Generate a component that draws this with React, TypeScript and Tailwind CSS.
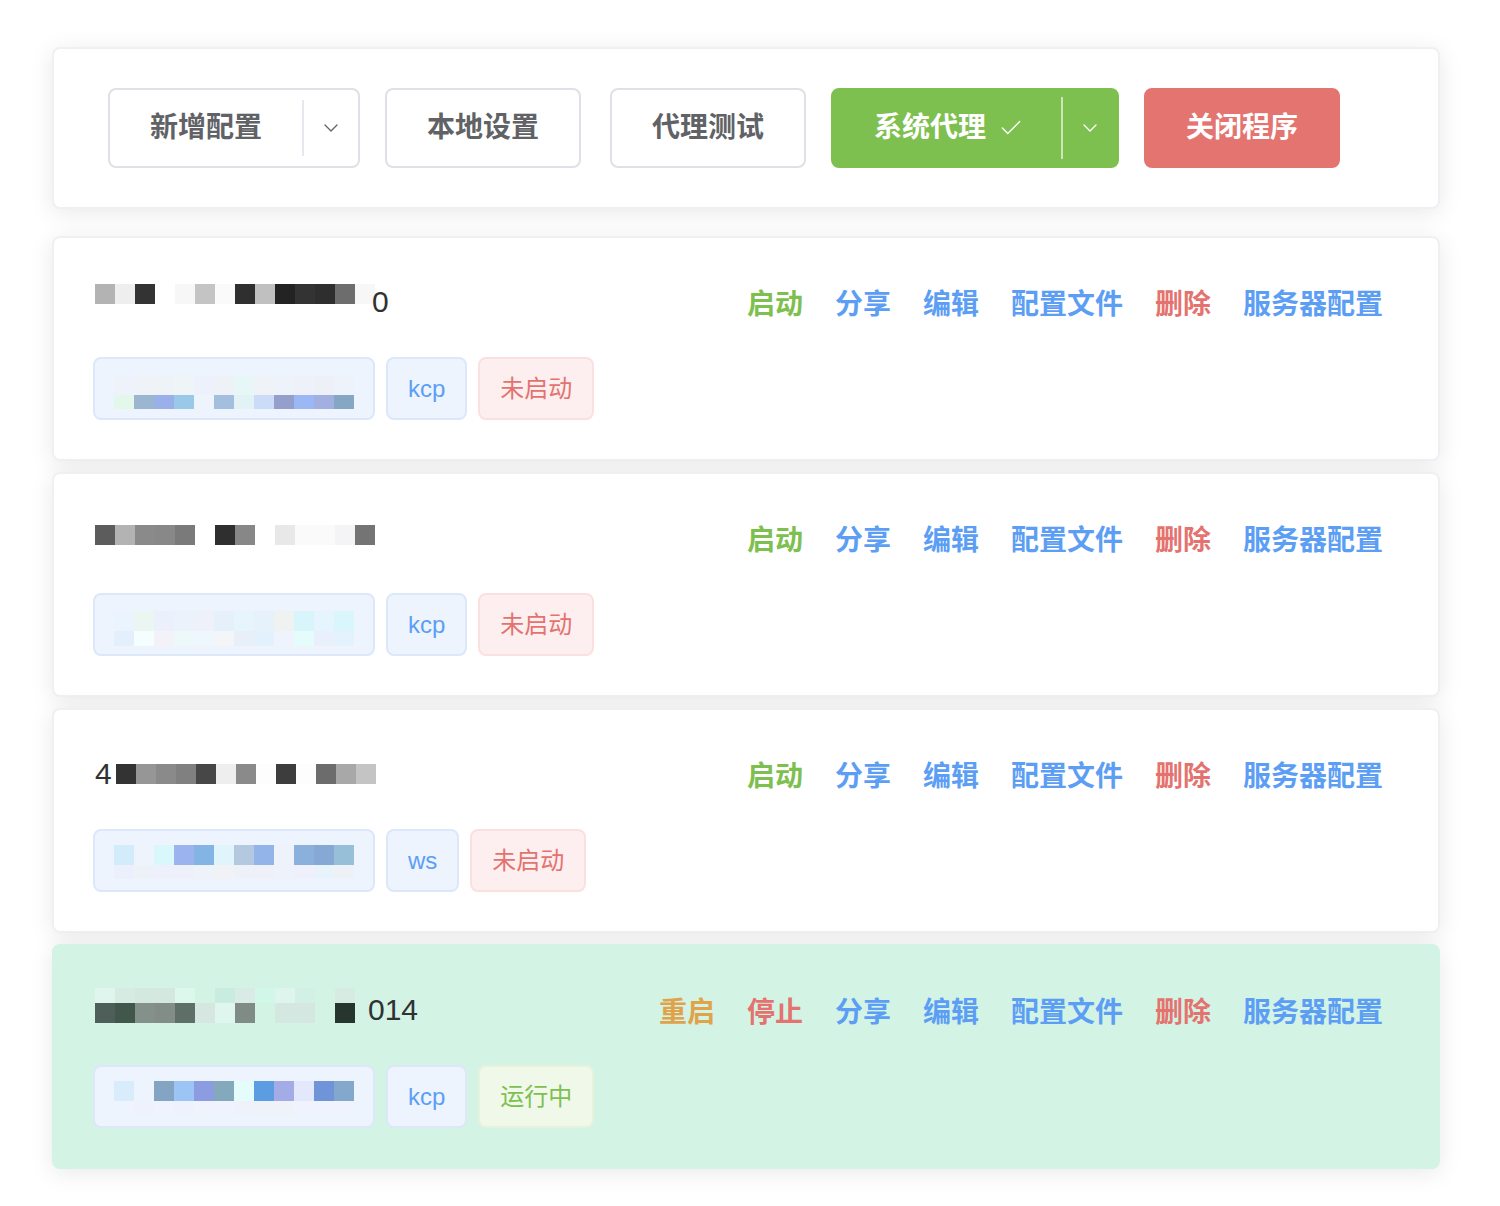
import React from "react";
import { ChevronDown, Check } from "lucide-react";

type Row = { h: number; c: (string | null)[] };

function Mosaic({ rows }: { rows: Row[] }) {
  return (
    <div className="flex flex-col">
      {rows.map((row, i) => (
        <div key={i} className="flex">
          {row.c.map((color, j) => (
            <div
              key={j}
              className="w-[20px] shrink-0"
              style={{ height: row.h, backgroundColor: color ?? "transparent" }}
            />
          ))}
        </div>
      ))}
    </div>
  );
}

type Item = {
  running: boolean;
  title: React.ReactNode;
  addr: Row[];
  addrPad: string;
  proto: string;
};

const items: Item[] = [
  {
    running: false,
    title: (
      <div className="flex items-center">
        <div className="mt-[-14px]">
          <Mosaic
            rows={[
              {
                h: 20,
                c: ["#b3b3b3", "#eeeeee", "#333333", null, "#f7f7f7", "#c4c4c4", "#fafafa", "#2f2f2f", "#c0c0c0", "#232323", "#333333", "#2e2e2e", "#6d6d6d", "#f7f7f7"],
              },
            ]}
          />
        </div>
        <span className="-ml-[3px]">0</span>
      </div>
    ),
    addr: [
      { h: 19, c: ["#eef2fa", "#eff3f7", "#eef3f8", "#eff5f7", "#edf1fb", "#eef2f7", "#e7f7f7", "#eff2f6", "#eef2fb", "#eef1f9", "#eef0f7", "#eef3fb"] },
      { h: 14, c: ["#e3f7ea", "#9ab6d0", "#9ab0e8", "#9ac8e8", "#eef4fc", "#a4bee0", "#e3f3f5", "#cadcf8", "#949fcc", "#9bb8f4", "#a1b0e0", "#84a8c4"] },
    ],
    addrPad: "pt-[7px]",
    proto: "kcp",
  },
  {
    running: false,
    title: (
      <div className="flex items-center">
        <div className="mt-[-4px]">
          <Mosaic
            rows={[
              {
                h: 20,
                c: ["#5c5c5c", "#b3b3b3", "#8a8a8a", "#888888", "#7a7a7a", null, "#2f2f2f", "#878787", null, "#e8e8e8", "#fafafa", "#fafafa", "#f4f4f6", "#747474"],
              },
            ]}
          />
        </div>
      </div>
    ),
    addr: [
      { h: 20, c: ["#eaf4fe", "#ebf6f3", "#ecf0fc", "#eaf3fc", "#eef0fa", "#e6f0fa", "#e6f5fb", "#e6f1fc", "#f0f2f2", "#d8f5fc", "#e6f4fd", "#d9f6fc"] },
      { h: 15, c: ["#e3effc", "#f4fefe", "#f2f2f8", "#edf9f8", "#edf7fd", "#f3f5f8", "#e8eff9", "#e3f1fd", "#eef3fd", "#e5fcfc", "#eaeffc", "#e3f2fc"] },
    ],
    addrPad: "pt-[8px]",
    proto: "kcp",
  },
  {
    running: false,
    title: (
      <div className="flex items-center">
        <span>4</span>
        <div className="ml-[4px] mt-[1px]">
          <Mosaic
            rows={[
              {
                h: 20,
                c: ["#333333", "#969696", "#8a8a8a", "#808080", "#474747", "#eeeeee", "#8a8a8a", "#fdfdfd", "#3d3d3d", "#fdfdfd", "#6c6c6c", "#a8a8a8", "#c4c4c4"],
              },
            ]}
          />
        </div>
      </div>
    ),
    addr: [
      { h: 20, c: ["#d3ecfc", "#eef4fc", "#d8f8fc", "#9bb4f0", "#83b4e4", "#e0f4fc", "#b4c8e0", "#93b4e8", "#eef2fa", "#8bb0dc", "#85a8d4", "#97c0d8"] },
      { h: 14, c: ["#eceffc", "#edf2f8", "#eef0fc", "#eef1fa", "#eef3f9", "#f0f2f6", "#eef1f7", "#eef2f8", "#eef2fa", "#eef0fb", "#e8f3fc", "#eef2f6"] },
    ],
    addrPad: "pt-[2px]",
    proto: "ws",
  },
  {
    running: true,
    title: (
      <div className="flex items-center">
        <div className="mt-[-8px]">
          <Mosaic
            rows={[
              { h: 15, c: ["#e0f5ee", "#d6ebe2", "#d3e8df", "#d4e8e0", "#dcf7ec", null, "#c8ece0", "#d8ebe4", "#d1f7e8", "#def5ee", "#d3f0e5", null, "#d6ece3"] },
              { h: 20, c: ["#4d5f58", "#41574c", "#84908a", "#838d88", "#5e6f68", "#d6e6e0", "#dff6ef", "#7f8c86", null, "#d4e7e0", "#d4e7e0", null, "#26362f"] },
            ]}
          />
        </div>
        <span className="ml-[13px]">014</span>
      </div>
    ),
    addr: [
      { h: 20, c: ["#d8ecfc", null, "#84a4c4", "#9cc4f4", "#8c9ce0", "#84a8bc", "#e4fcfc", "#5c9ce0", "#a4ace8", "#e4e8fc", "#7094d8", "#84a8cc"] },
      { h: 14, c: ["#eef3fd", "#edf2fd", "#eef3fd", "#eef2fd", "#eff3fc", "#eef3fd", "#eff2fb", "#f0f2fa", "#f0f2fa", "#eef3fd", "#eef3fd", "#eef3fd"] },
    ],
    addrPad: "pt-[2px]",
    proto: "kcp",
  },
];

function ProxyCard({ item }: { item: Item }) {
  const links = item.running
    ? [
        { t: "重启", c: "text-[#e0a34a]" },
        { t: "停止", c: "text-[#e4736f]" },
      ]
    : [{ t: "启动", c: "text-[#7ec050]" }];
  const rest = [
    { t: "分享", c: "text-[#5d9ef5]" },
    { t: "编辑", c: "text-[#5d9ef5]" },
    { t: "配置文件", c: "text-[#5d9ef5]" },
    { t: "删除", c: "text-[#e4736f]" },
    { t: "服务器配置", c: "text-[#5d9ef5]" },
  ];

  return (
    <div
      className={`h-[225px] rounded-[8px] border-2 pl-[39px] pr-[55px] pt-[38px] pb-[39px] shadow-[0_4px_24px_rgba(0,0,0,0.09)] ${
        item.running ? "bg-[#d3f3e5] border-[#d3f3e5]" : "bg-white border-[#eef0f4]"
      }`}
    >
      <div className="flex items-start justify-between">
        <div className="h-[50px] pl-[2px] flex items-center text-[30px] text-[#303133]">{item.title}</div>
        <div className="flex gap-8 text-[28px] font-semibold leading-[58px]">
          {[...links, ...rest].map((l) => (
            <span key={l.t} className={`cursor-pointer ${l.c}`}>
              {l.t}
            </span>
          ))}
        </div>
      </div>
      <div className="mt-[23px] flex gap-[11px]">
        <div
          className={`w-[282px] h-[63px] rounded-[8px] border-2 border-[#dce8fa] bg-[#edf4fe] pl-[19px] flex items-center ${item.addrPad}`}
        >
          <Mosaic rows={item.addr} />
        </div>
        <div className="h-[63px] px-[20px] rounded-[8px] border-2 border-[#dce8fa] bg-[#edf4fe] flex items-center text-[24px] text-[#5d9ef5]">
          {item.proto}
        </div>
        {item.running ? (
          <div className="h-[63px] px-[20px] rounded-[8px] border-2 border-[#e6f3dc] bg-[#f0f8ea] flex items-center text-[24px] text-[#7ec050]">
            运行中
          </div>
        ) : (
          <div className="h-[63px] px-[20px] rounded-[8px] border-2 border-[#fbe0e0] bg-[#fdefef] flex items-center text-[24px] text-[#e4736f]">
            未启动
          </div>
        )}
      </div>
    </div>
  );
}

export default function App() {
  return (
    <div className="min-h-[1206px] bg-white pt-[47px] pl-[52px] pr-[60px] font-['Liberation_Sans','Noto_Sans_CJK_SC',sans-serif]">
      {/* toolbar */}
      <div className="mb-[27px] rounded-[8px] border-2 border-[#eef0f4] bg-white px-[54px] py-[39px] shadow-[0_4px_24px_rgba(0,0,0,0.09)]">
        <div className="flex items-center gap-[25px] text-[28px] font-semibold">
          <div className="flex h-[80px] items-center rounded-[8px] border-2 border-[#dfe1e7] bg-white text-[#606266]">
            <span className="px-[40px]">新增配置</span>
            <div className="h-[56px] w-[2px] bg-[#e6e8ed]" />
            <div className="flex w-[54px] justify-center">
              <ChevronDown size={24} strokeWidth={1.3} />
            </div>
          </div>
          <button className="h-[80px] rounded-[8px] border-2 border-[#dfe1e7] bg-white px-[40px] text-[#606266]">
            本地设置
          </button>
          <button className="ml-[4px] h-[80px] rounded-[8px] border-2 border-[#dfe1e7] bg-white px-[40px] text-[#606266]">
            代理测试
          </button>
          <div className="flex h-[80px] items-center rounded-[8px] border-2 border-[#7ec050] bg-[#7ec050] text-white">
            <span className="flex items-center gap-3 pl-[41px] pr-[37px]">
              系统代理
              <Check size={26} strokeWidth={1.3} />
            </span>
            <div className="h-[62px] w-[2px] bg-white/60" />
            <div className="flex w-[54px] justify-center">
              <ChevronDown size={24} strokeWidth={1.3} />
            </div>
          </div>
          <button className="h-[80px] rounded-[8px] border-2 border-[#e47470] bg-[#e47470] px-[40px] text-white">
            关闭程序
          </button>
        </div>
      </div>

      <div className="flex flex-col gap-[11px]">
        {items.map((it, i) => (
          <ProxyCard key={i} item={it} />
        ))}
      </div>
    </div>
  );
}
